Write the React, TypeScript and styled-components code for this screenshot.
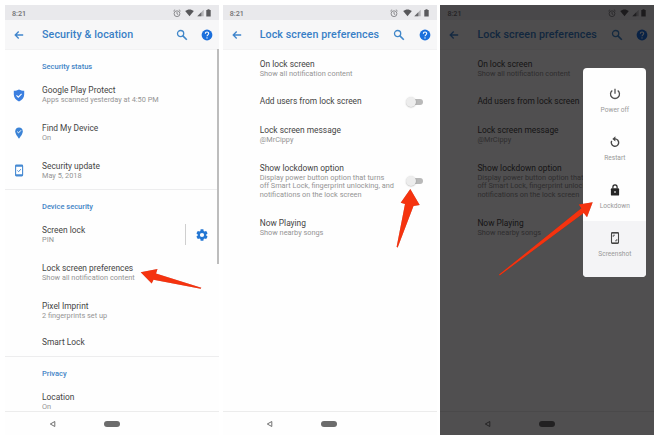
import React from "react";
import styled, { createGlobalStyle } from "styled-components";

const Global = createGlobalStyle`
  * { box-sizing: border-box; }
  body { margin: 0; background: #fff; font-family: Roboto, "Liberation Sans", sans-serif; }
`;

const Stage = styled.main`
  position: relative;
  width: 660px;
  height: 440px;
  padding: 5px;
  display: flex;
  gap: 3.7px;
  overflow: hidden;
`;

const PhoneFrame = styled.section`
  position: relative;
  width: 214px;
  height: 430px;
  flex: none;
  display: flex;
  flex-direction: column;
  background: #fefefe;
`;

const StatusBar = styled.div`
  height: 15px;
  flex: none;
  display: flex;
  align-items: center;
  justify-content: space-between;
  padding: 1px 8px 0 7px;
  background: #e9e9ec;
  color: #707073;
  font-size: 7.2px;
  font-weight: 500;
`;

const StatusIcons = styled.div`
  display: flex;
  align-items: center;
  gap: 2.5px;
  > :first-child { margin-right: 2px; }
`;

const AppBar = styled.header`
  height: 30px;
  flex: none;
  display: flex;
  align-items: center;
  padding: 0 6px 0 9px;
  background: #f7f7f8;
  border-bottom: 1px solid #f2f2f3;
`;

const Title = styled.h1`
  margin: 0 0 0 18px;
  flex: 1;
  color: #397fc6;
  font-size: 10.7px;
  font-weight: 500;
  letter-spacing: 0.09px;
  white-space: nowrap;
`;

const HeaderIcons = styled.div`
  display: flex;
  align-items: center;
  gap: 13.5px;
`;

const Content = styled.div`
  height: 361px;
  flex: none;
  overflow: hidden;
`;

const SectionLabel = styled.h2<{ $top: number }>`
  margin: 0;
  height: 26px;
  padding: ${(p) => p.$top}px 0 0 37px;
  color: #4385c6;
  font-size: 7.5px;
  line-height: 10px;
  font-weight: 500;
`;

const Row = styled.div<{ $height?: number }>`
  height: ${(p) => p.$height ?? 38}px;
  display: grid;
  grid-template-columns: 37px 1fr auto;
  align-items: center;
`;

const RowIcon = styled.div`
  padding-left: 8px;
  display: flex;
`;

const RowTitle = styled.div`
  color: #454545;
  font-size: 8.4px;
  line-height: 11px;
  white-space: nowrap;
`;

const RowNote = styled.div`
  color: #949494;
  font-size: 7.35px;
  line-height: 8.6px;
  white-space: pre;
`;

const Rule = styled.hr`
  height: 1px;
  margin: 0;
  border: 0;
  background: #ededee;
`;

const GearSlot = styled.div`
  height: 21px;
  width: 34px;
  display: flex;
  align-items: center;
  padding-left: 10px;
  border-left: 1px solid #cfcfcf;
`;

const Toggle = styled.div`
  position: relative;
  width: 15px;
  height: 6px;
  margin-right: 14px;
  border-radius: 3px;
  background: #b9b9b9;
  &::before {
    content: "";
    position: absolute;
    left: -2px;
    top: -2px;
    width: 10px;
    height: 10px;
    border-radius: 50%;
    background: #ededed;
    box-shadow: 0 0.5px 1.5px rgba(0, 0, 0, 0.28);
  }
`;

const NavBar = styled.nav`
  height: 24px;
  display: flex;
  align-items: center;
  padding-left: 43.5px;
  gap: 48.3px;
  border-top: 1px solid #ececec;
`;

const HomePill = styled.div`
  width: 16px;
  height: 6px;
  border-radius: 3px;
  background: #6c6c6c;
`;

const ScrollThumb = styled.div`
  position: absolute;
  left: 212px;
  top: 44px;
  width: 2px;
  height: 215px;
  background: #bdbdbd;
`;

const Scrim = styled.div`
  position: absolute;
  inset: 0;
  background: rgba(1, 0, 1, 0.69);
`;

const PowerMenu = styled.div`
  position: absolute;
  left: 143px;
  top: 63px;
  width: 63px;
  height: 209px;
  border-radius: 4px;
  overflow: hidden;
  background: #fefefe;
  display: grid;
  grid-template-rows: 57px 48px 48px 56px;
`;

const MenuItem = styled.div<{ $first?: boolean; $tinted?: boolean }>`
  padding-top: ${(p) => (p.$first ? 20 : 11)}px;
  display: flex;
  flex-direction: column;
  align-items: center;
  gap: 5.5px;
  background: ${(p) => (p.$tinted ? "#f4f4f6" : "transparent")};
  color: #999;
  font-size: 6.6px;
  line-height: 9px;
`;

const ArrowLayer = styled.svg`
  position: absolute;
  left: 0;
  top: 0;
  filter: drop-shadow(0 0.5px 0.7px rgba(90, 0, 0, 0.35));
`;

const BackArrow = () => (
  <svg width="10" height="10" viewBox="0 0 10 10" fill="none" stroke="#3f85cc" strokeWidth="1.3">
    <path d="M9.2 5H1.4M4.7 1.5 1.2 5l3.5 3.500" />
  </svg>
);

const SearchIcon = () => (
  <svg width="12" height="12" viewBox="0 0 12 12" fill="none" stroke="#4187c9">
    <circle cx="4.6" cy="4.6" r="3.1" strokeWidth="1.3" />
    <path d="m6.900 6.900 3.900 3.900" strokeWidth="1.6" />
  </svg>
);

const HelpIcon = () => (
  <svg width="12" height="12" viewBox="0 0 12 12">
    <circle cx="6" cy="6" r="5.4" fill="#1b6fdc" />
    <path d="M4.3 4.8C4.3 2.3 7.8 2.4 7.7 4.6 7.7 5.8 6 5.9 6 7.3" fill="none" stroke="#fff" strokeWidth="1.1" />
    <circle cx="6" cy="8.9" r=".7" fill="#fff" />
  </svg>
);

const AlarmIcon = () => (
  <svg width="8" height="9" viewBox="0 0 8 9" fill="none" stroke="#7b7b7e" strokeWidth=".85">
    <circle cx="4" cy="4.7" r="2.9" />
    <path d="M4 2.9v2l1.3.8M.4 2.1 2.1.7M7.6 2.1 5.9.7" />
  </svg>
);

const WifiIcon = () => (
  <svg width="9" height="8" viewBox="0 0 9 8" fill="#57575a">
    <path d="M.2 2C2.7-.1 6.3-.1 8.8 2L4.5 7.3Z" />
  </svg>
);

const SignalIcon = () => (
  <svg width="7" height="8" viewBox="0 0 7 8">
    <path d="M.3 7.2 6.7.8v6.4Z" fill="#b4b4b7" />
    <path d="M.3 7.2 4.3 3.2v4Z" fill="#68686b" />
  </svg>
);

const BatteryIcon = () => (
  <svg width="5" height="8" viewBox="0 0 5 8" fill="#59595c">
    <path d="M.3 1.1h1.2V.3h2v.8h1.2v6.5H.3Z" />
  </svg>
);

const ShieldIcon = () => (
  <svg width="12" height="13" viewBox="0 0 12 13">
    <path d="M6 .5c1.6.9 3.2 1.2 5.2 1.2v3.8c0 3.4-2.2 5.7-5.2 7-3-1.3-5.2-3.6-5.2-7V1.7C2.8 1.7 4.4 1.4 6 .5Z" fill="#3b7fe0" />
    <path d="m3.5 6.4 1.8 1.8 3.3-3.3" fill="none" stroke="#fff" strokeWidth="1.1" />
  </svg>
);

const PinIcon = () => (
  <svg width="12" height="12" viewBox="0 0 12 12">
    <path d="M6 .6c2.2 0 3.8 1.6 3.8 3.8C9.8 7.2 6 11.5 6 11.5S2.2 7.2 2.2 4.4C2.2 2.2 3.8.6 6 .6Z" fill="#3b83d6" />
    <path d="m4.2 4.6 1.3 1.3 2.5-2.6" fill="none" stroke="#fff" strokeWidth="1" />
  </svg>
);

const UpdateIcon = () => (
  <svg width="12" height="13" viewBox="0 0 12 13">
    <rect x="2.6" y="1.1" width="7" height="10.8" rx=".8" fill="#fff" stroke="#4589d2" strokeWidth="1.1" />
    <path d="M2.6 1.8h7M2.6 11.2h7" stroke="#4589d2" strokeWidth="1.7" />
    <path d="m4.4 6.5 1.2 1.2 2.2-2.5" fill="none" stroke="#4589d2" strokeWidth="1" />
  </svg>
);

const GearIcon = () => (
  <svg width="12" height="12" viewBox="1.500 1.500 21 21" fill="#2477d3">
    <path d="M19.43 12.98c.04-.32.07-.64.07-.98s-.03-.66-.07-.98l2.11-1.65c.19-.15.24-.42.12-.64l-2-3.46c-.12-.22-.39-.3-.61-.22l-2.49 1c-.52-.4-1.08-.73-1.69-.98l-.38-2.65C14.46 2.18 14.25 2 14 2h-4c-.25 0-.46.18-.49.42l-.38 2.65c-.61.25-1.17.59-1.69.98l-2.49-1c-.23-.09-.49 0-.61.22l-2 3.46c-.13.22-.07.49.12.64l2.11 1.65c-.04.32-.07.65-.07.98s.03.66.07.98l-2.11 1.65c-.19.15-.24.42-.12.64l2 3.46c.12.22.39.3.61.22l2.49-1c.52.4 1.08.73 1.69.98l.38 2.65c.03.24.24.42.49.42h4c.25 0 .46-.18.49-.42l.38-2.65c.61-.25 1.17-.59 1.69-.98l2.49 1c.23.09.49 0 .61-.22l2-3.46c.12-.22.07-.49-.12-.64ZM12 15.7a3.7 3.7 0 1 1 0-7.4 3.7 3.7 0 0 1 0 7.4Z" />
  </svg>
);

const NavBack = () => (
  <svg width="7" height="8" viewBox="0 0 7 8" fill="none" stroke="#707070" strokeWidth="1">
    <path d="M5.8 1.5v5L1.3 4Z" />
  </svg>
);

const PowerIcon = () => (
  <svg width="12" height="12" viewBox="0 0 12 12" fill="none" stroke="#505050" strokeWidth="1.3">
    <path d="M6 .8v5M3.3 2.400a4.500 4.500 0 1 0 5.400 0" />
  </svg>
);

const RestartIcon = () => (
  <svg width="12" height="12" viewBox="0 0 12 12">
    <path d="M6 2.9a3.7 3.7 0 1 1-3.300 2" fill="none" stroke="#484848" strokeWidth="1.4" />
    <path d="M6.4.2v5.400L3.300 2.900Z" fill="#484848" />
  </svg>
);

const LockIcon = () => (
  <svg width="12" height="12" viewBox="0 0 12 12">
    <rect x="1.9" y="4.3" width="8.2" height="7.3" rx=".9" fill="#252525" />
    <path d="M3.9 4.6V2.9a2.1 2.1 0 0 1 4.2 0v1.7" fill="none" stroke="#252525" strokeWidth="1.2" />
    <circle cx="6" cy="7.9" r="1" fill="#bbb" />
  </svg>
);

const ScreenshotIcon = () => (
  <svg width="12" height="12" viewBox="0 0 12 12" fill="none" stroke="#454545">
    <rect x="2.5" y=".6" width="7" height="10.8" rx=".9" strokeWidth="1.1" />
    <path d="M2.5 1.2h7M2.5 10.8h7" strokeWidth=".7" />
    <path d="M4.2 5V3.200H6M7.800 7v1.800H6" strokeWidth=".8" />
  </svg>
);

function Phone({ title, children, overlay }: {
  title: string;
  children: React.ReactNode;
  overlay?: React.ReactNode;
}) {
  return (
    <PhoneFrame>
      <StatusBar>
        <span>8:21</span>
        <StatusIcons><AlarmIcon /><WifiIcon /><SignalIcon /><BatteryIcon /></StatusIcons>
      </StatusBar>
      <AppBar>
        <BackArrow />
        <Title>{title}</Title>
        <HeaderIcons><SearchIcon /><HelpIcon /></HeaderIcons>
      </AppBar>
      <Content>{children}</Content>
      <NavBar><NavBack /><HomePill /></NavBar>
      {overlay}
    </PhoneFrame>
  );
}

function Setting({ title, note, icon, action, height }: {
  title: string;
  note?: string;
  icon?: React.ReactNode;
  action?: React.ReactNode;
  height?: number;
}) {
  return (
    <Row $height={height}>
      <RowIcon>{icon}</RowIcon>
      <div>
        <RowTitle>{title}</RowTitle>
        {note && <RowNote>{note}</RowNote>}
      </div>
      {action}
    </Row>
  );
}

const lockdownNote =
  "Display power button option that turns\noff Smart Lock, fingerprint unlocking, and\nnotifications on the lock screen";

const LockPreferences = () => (
  <>
    <Setting title="On lock screen" note="Show all notification content" />
    <Setting title="Add users from lock screen" height={27} action={<Toggle />} />
    <Setting title="Lock screen message" note="@MrCippy" height={39} />
    <Setting title="Show lockdown option" note={lockdownNote} height={54} action={<Toggle />} />
    <Setting title="Now Playing" note="Show nearby songs" height={39} />
  </>
);

export default function App() {
  return (
    <>
      <Global />
      <Stage>
        <Phone title="Security & location" overlay={<ScrollThumb />}>
          <SectionLabel $top={12}>Security status</SectionLabel>
          <Setting title="Google Play Protect" note="Apps scanned yesterday at 4:50 PM" icon={<ShieldIcon />} />
          <Setting title="Find My Device" note="On" icon={<PinIcon />} />
          <Setting title="Security update" note="May 5, 2018" height={37} icon={<UpdateIcon />} />
          <Rule />
          <SectionLabel $top={12}>Device security</SectionLabel>
          <Setting title="Screen lock" note="PIN" height={37} action={<GearSlot><GearIcon /></GearSlot>} />
          <Setting title="Lock screen preferences" note="Show all notification content" height={39} />
          <Setting title="Pixel Imprint" note="2 fingerprints set up" height={37} />
          <Setting title="Smart Lock" height={27} />
          <Rule />
          <SectionLabel $top={12}>Privacy</SectionLabel>
          <Setting title="Location" note="On" />
        </Phone>
        <Phone title="Lock screen preferences">
          <LockPreferences />
        </Phone>
        <Phone
          title="Lock screen preferences"
          overlay={
            <>
              <Scrim />
              <PowerMenu>
                <MenuItem $first><PowerIcon />Power off</MenuItem>
                <MenuItem><RestartIcon />Restart</MenuItem>
                <MenuItem><LockIcon />Lockdown</MenuItem>
                <MenuItem $tinted><ScreenshotIcon />Screenshot</MenuItem>
              </PowerMenu>
            </>
          }
        >
          <LockPreferences />
        </Phone>
        <ArrowLayer width="660" height="440" viewBox="0 0 660 440" fill="#f5330f">
          <path d="M140.7 272.3 157.5 269 156 273.6 201.3 287.7 200.7 288.7 153.5 279.8 151.7 283.5Z" />
          <path d="M410.3 189 419.7 205 413.5 206 397.7 247.5 396.6 247 405 204 400.7 202.7Z" />
          <path d="M592.7 202.3 587 217.2 583.8 213 499.7 275.4 499 274.6 581.3 208.3 578.7 204.4Z" />
        </ArrowLayer>
      </Stage>
    </>
  );
}
